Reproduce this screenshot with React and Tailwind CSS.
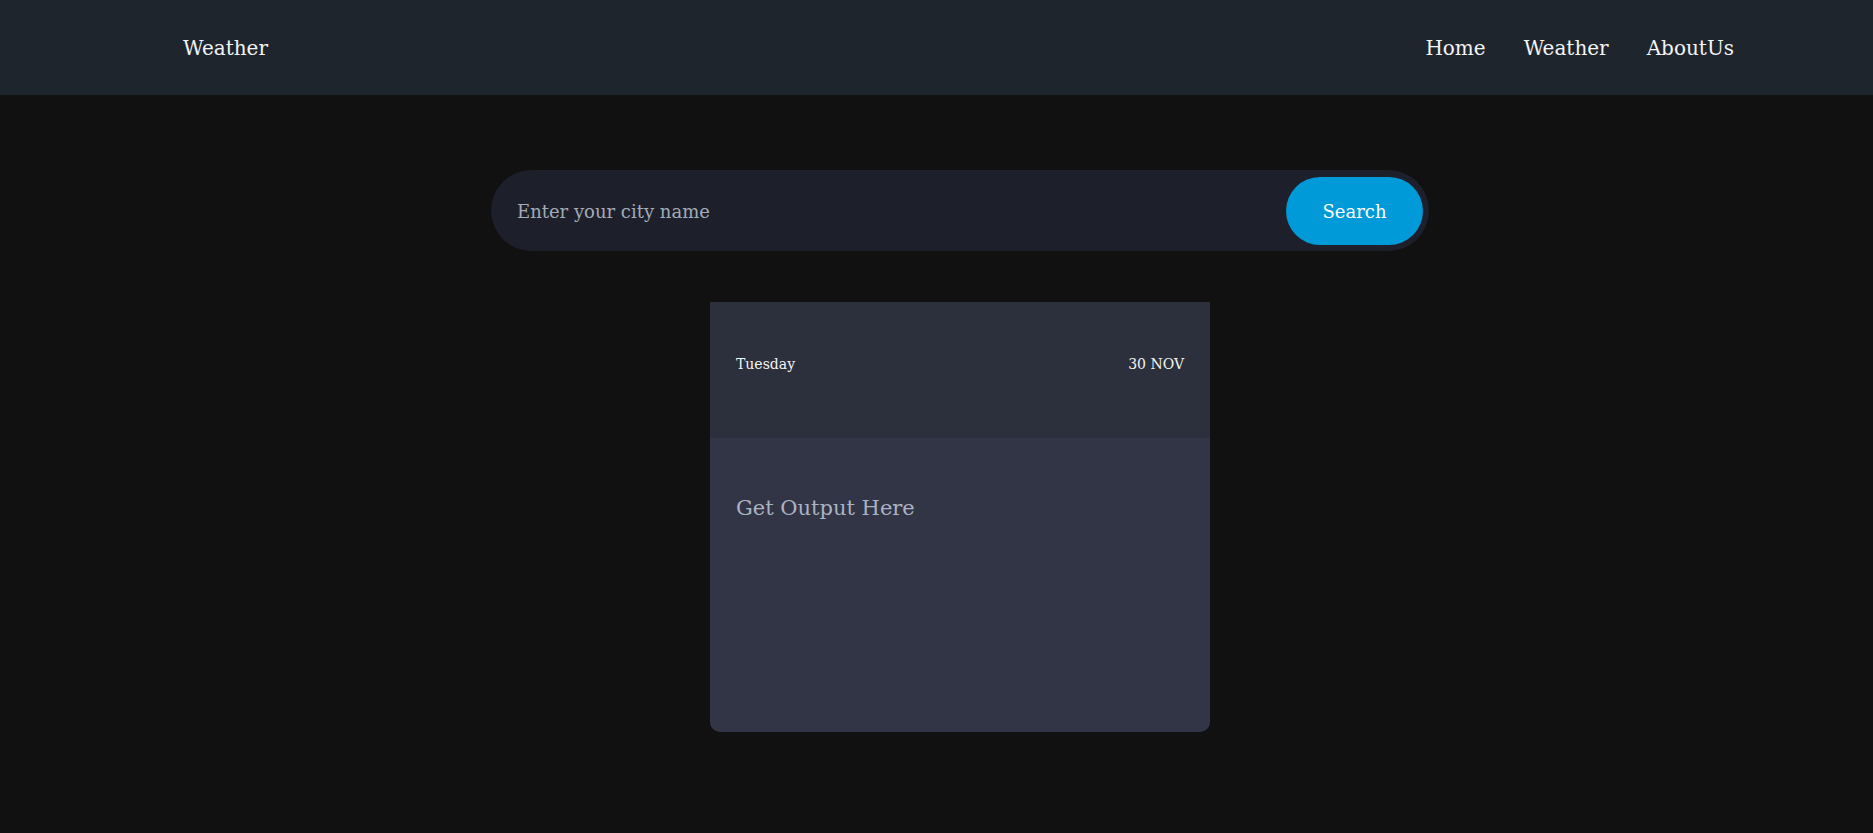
export default function App() {
  return (
    <div className="min-h-[833px] bg-[#111111] text-white" style={{ fontFamily: '"DejaVu Serif", "Liberation Serif", serif' }}>
      {/* Navbar */}
      <nav className="h-[95px] bg-[#1f252d] flex items-center justify-between pl-[183px] pr-[139px]">
        <a href="#" className="text-[20px] text-[#f3f4f6]">Weather</a>
        <ul className="flex items-center gap-[38px] text-[20px] text-[#f3f4f6]">
          <li><a href="#">Home</a></li>
          <li><a href="#">Weather</a></li>
          <li><a href="#">AboutUs</a></li>
        </ul>
      </nav>

      <main className="pl-[47px] flex flex-col items-center">
        {/* Search */}
        <form className="mt-[75px] w-[938px] h-[81px] bg-[#1d1f2a] rounded-full flex items-center justify-between pl-[26px] pr-[6px]">
          <input
            type="text"
            placeholder="Enter your city name"
            className="flex-1 bg-transparent outline-none text-[18px] text-gray-200 placeholder:text-[#a3abb9] pt-[2px]"
          />
          <button type="button" className="w-[137px] h-[68px] rounded-full bg-[#009ad9] text-[18px] text-white pt-[2px]">
            Search
          </button>
        </form>

        {/* Card */}
        <div className="mt-[51px] w-[500px] rounded-b-[10px] overflow-hidden">
          <div className="h-[136px] bg-[#2c303c] flex items-center justify-between px-[26px] pb-[12px] text-[14px] text-[#f3f4f6]">
            <span>Tuesday</span>
            <span>30 NOV</span>
          </div>
          <div className="h-[294px] bg-[#323546] px-[26px] pt-[60px]">
            <p className="text-[21px] text-[#aab3c3] leading-none">Get Output Here</p>
          </div>
        </div>
      </main>
    </div>
  );
}
